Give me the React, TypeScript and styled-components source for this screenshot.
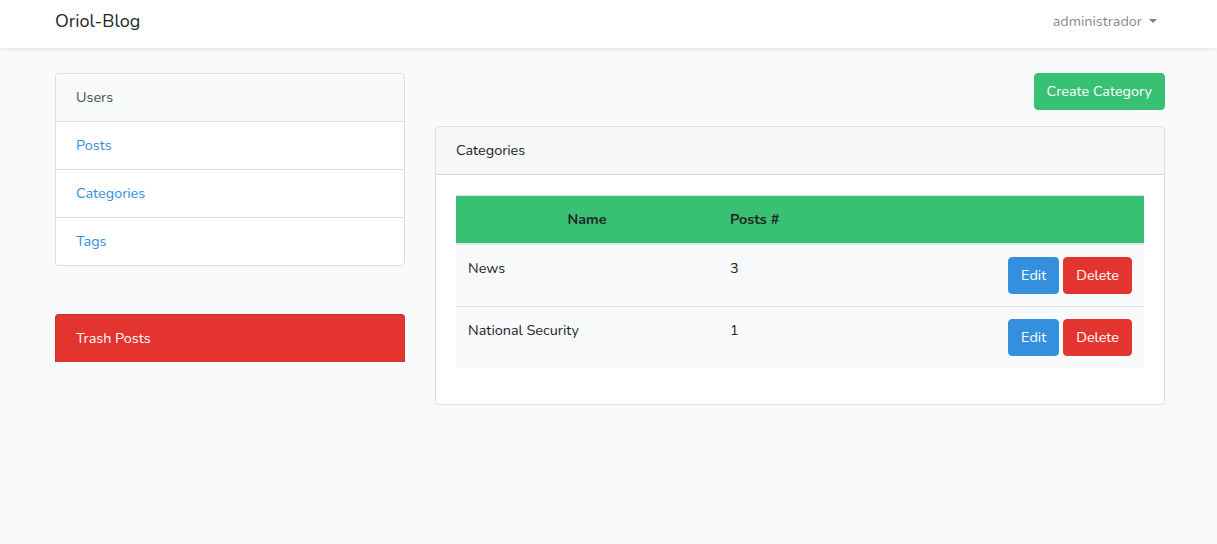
import React from "react";
import styled, { createGlobalStyle } from "styled-components";

const Global = createGlobalStyle`
  html, body { margin: 0; padding: 0; background: #f8fafc; }
  body {
    font-family: "Nunito", "Lato", "Noto Sans", sans-serif;
    font-size: 14.4px;
    line-height: 1.6;
    color: #212529;
    min-height: 544px;
  }
  * { box-sizing: border-box; }
`;

const NavBar = styled.nav`
  background: #fff;
  height: 48px;
  box-shadow: 0 0.125rem 0.25rem rgba(0, 0, 0, 0.075);
`;

const Container = styled.div`
  width: 1110px;
  margin-left: 55px;
  height: 100%;
`;

const NavInner = styled(Container)`
  display: flex;
  align-items: center;
  justify-content: space-between;
`;

const Brand = styled.a`
  font-size: 18px;
  color: #212529;
  text-decoration: none;
  margin-top: -5px;
`;

const UserMenu = styled.a`
  display: flex;
  align-items: center;
  gap: 7px;
  padding: 0 8px;
  color: rgba(0, 0, 0, 0.5);
  text-decoration: none;
  margin-top: -5px;
  &::after {
    content: "";
    border-top: 4.8px solid rgba(0, 0, 0, 0.5);
    border-left: 4.8px solid transparent;
    border-right: 4.8px solid transparent;
    margin-top: -1px;
  }
`;

const Main = styled(Container)`
  padding-top: 25px;
  display: grid;
  grid-template-columns: 350px 730px;
  column-gap: 30px;
  align-items: start;
`;

const SideColumn = styled.div`
  display: flex;
  flex-direction: column;
  gap: 48px;
`;

const ListGroup = styled.div`
  display: flex;
  flex-direction: column;
  border: 1px solid rgba(0, 0, 0, 0.125);
  border-radius: 4px;
  overflow: hidden;
  background: #fff;
`;

const ListItem = styled.a<{ $active?: boolean }>`
  display: block;
  padding: 12px 20px;
  text-decoration: none;
  color: ${(p) => (p.$active ? "#495057" : "#3490dc")};
  background: ${(p) => (p.$active ? "#f8f9fa" : "#fff")};
  & + & { border-top: 1px solid rgba(0, 0, 0, 0.125); }
`;

const TrashLink = styled.a`
  display: block;
  height: 48px;
  padding: 12px 20px;
  background: #e3342f;
  color: #fff;
  border: 1px solid #d0302b;
  border-bottom: none;
  border-radius: 4px 4px 0 0;
  text-decoration: none;
`;

const ContentColumn = styled.div`
  display: flex;
  flex-direction: column;
`;

const Toolbar = styled.div`
  display: flex;
  justify-content: flex-end;
  margin-bottom: 16px;
`;

const Button = styled.button<{ $variant: "success" | "primary" | "danger" }>`
  font-family: inherit;
  font-size: 14.4px;
  line-height: 1.6;
  padding: 6px 12px;
  border-radius: 4px;
  color: #fff;
  cursor: pointer;
  background: ${(p) =>
    p.$variant === "success" ? "#38c172" : p.$variant === "primary" ? "#3490dc" : "#e3342f"};
  border: 1px solid
    ${(p) =>
      p.$variant === "success" ? "#38c172" : p.$variant === "primary" ? "#3490dc" : "#e3342f"};
`;

const Card = styled.div`
  background: #fff;
  border: 1px solid rgba(0, 0, 0, 0.125);
  border-radius: 4px;
`;

const CardHeader = styled.div`
  padding: 12px 20px;
  background: #f7f7f7;
  border-bottom: 1px solid rgba(0, 0, 0, 0.125);
  border-radius: 4px 4px 0 0;
`;

const CardBody = styled.div`
  padding: 20px;
`;

const Table = styled.table`
  width: 100%;
  border-collapse: collapse;
  margin-bottom: 16px;
  background: #f8f9fa;
`;

const Th = styled.th<{ $align?: string; $width?: string }>`
  background: #38c172;
  padding: 12px;
  font-weight: 700;
  text-align: ${(p) => p.$align || "left"};
  width: ${(p) => p.$width || "auto"};
  border-top: 1px solid #dee2e6;
  border-bottom: 2px solid #dee2e6;
  vertical-align: bottom;
`;

const Td = styled.td<{ $align?: string }>`
  padding: 12px;
  vertical-align: top;
  border-top: 1px solid #dee2e6;
  text-align: ${(p) => p.$align || "left"};
`;

const Actions = styled.div`
  display: flex;
  justify-content: flex-end;
  gap: 4px;
`;

const categories = [
  { name: "News", posts: 3 },
  { name: "National Security", posts: 1 },
];

export default function App() {
  return (
    <>
      <Global />
      <NavBar>
        <NavInner>
          <Brand href="#">Oriol-Blog</Brand>
          <UserMenu href="#">administrador</UserMenu>
        </NavInner>
      </NavBar>
      <Main>
        <SideColumn>
          <ListGroup>
            <ListItem $active>Users</ListItem>
            <ListItem href="#">Posts</ListItem>
            <ListItem href="#">Categories</ListItem>
            <ListItem href="#">Tags</ListItem>
          </ListGroup>
          <TrashLink href="#">Trash Posts</TrashLink>
        </SideColumn>
        <ContentColumn>
          <Toolbar>
            <Button $variant="success">Create Category</Button>
          </Toolbar>
          <Card>
            <CardHeader>Categories</CardHeader>
            <CardBody>
              <Table>
                <thead>
                  <tr>
                    <Th $align="center" $width="262px">Name</Th>
                    <Th $width="200px">Posts #</Th>
                    <Th></Th>
                  </tr>
                </thead>
                <tbody>
                  {categories.map((c) => (
                    <tr key={c.name}>
                      <Td>{c.name}</Td>
                      <Td>{c.posts}</Td>
                      <Td $align="right">
                        <Actions>
                          <Button $variant="primary">Edit</Button>
                          <Button $variant="danger">Delete</Button>
                        </Actions>
                      </Td>
                    </tr>
                  ))}
                </tbody>
              </Table>
            </CardBody>
          </Card>
        </ContentColumn>
      </Main>
    </>
  );
}
